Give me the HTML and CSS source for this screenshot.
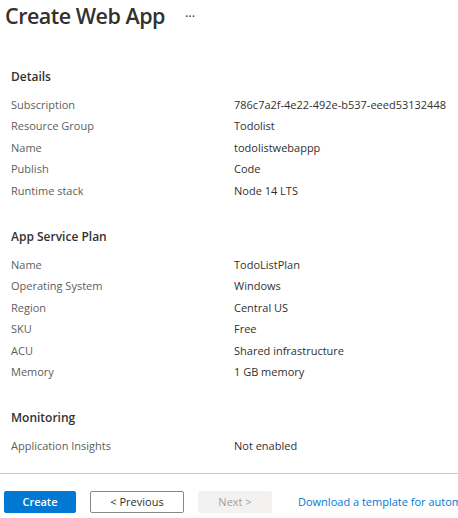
FILE: index.html
```html
<!DOCTYPE html>
<html lang="en">
<head>
<meta charset="utf-8">
<title>Create Web App</title>
<link rel="stylesheet" href="styles.css">
</head>
<body>
<div class="page">
  <header class="header">
    <h1 class="title">Create Web App</h1>
    <span class="more">···</span>
  </header>
  <main class="content">
    <section class="section">
      <h2 class="section-title">Details</h2>
      <div class="row"><span class="label">Subscription</span><span class="value">786c7a2f-4e22-492e-b537-eeed53132448</span></div>
      <div class="row"><span class="label">Resource Group</span><span class="value">Todolist</span></div>
      <div class="row"><span class="label">Name</span><span class="value">todolistwebappp</span></div>
      <div class="row"><span class="label">Publish</span><span class="value">Code</span></div>
      <div class="row"><span class="label">Runtime stack</span><span class="value">Node 14 LTS</span></div>
    </section>
    <section class="section">
      <h2 class="section-title">App Service Plan</h2>
      <div class="row"><span class="label">Name</span><span class="value">TodoListPlan</span></div>
      <div class="row"><span class="label">Operating System</span><span class="value">Windows</span></div>
      <div class="row"><span class="label">Region</span><span class="value">Central US</span></div>
      <div class="row"><span class="label">SKU</span><span class="value">Free</span></div>
      <div class="row"><span class="label">ACU</span><span class="value">Shared infrastructure</span></div>
      <div class="row"><span class="label">Memory</span><span class="value">1 GB memory</span></div>
    </section>
    <section class="section">
      <h2 class="section-title">Monitoring</h2>
      <div class="row"><span class="label">Application Insights</span><span class="value">Not enabled</span></div>
    </section>
  </main>
  <footer class="footer">
    <button class="btn btn-primary">Create</button>
    <button class="btn btn-default">&lt; Previous</button>
    <button class="btn btn-disabled" disabled>Next &gt;</button>
    <a class="link" href="#">Download a template for automation</a>
  </footer>
</div>
</body>
</html>
```

FILE: styles.css
```css
* { box-sizing: border-box; }
html, body { margin: 0; padding: 0; background: #fff; }
body {
  font-family: "Segoe UI", "Open Sans", "Liberation Sans", sans-serif;
  font-size: 11px;
  color: #323130;
  overflow: hidden;
}
.page { width: 458px; height: 518px; display: flex; flex-direction: column; overflow: hidden; }
.header {
  display: flex;
  align-items: center;
  gap: 20px;
  padding: 0 0 0 5px;
  height: 32px;
  flex-shrink: 0;
}
.title {
  margin: 0;
  font-size: 21.5px;
  font-weight: 600;
  line-height: 32px;
  letter-spacing: -0.5px;
  color: #323130;
}
.more { font-size: 13px; color: #323130; line-height: 32px; }
.content { padding: 36px 0 0 11px; flex-shrink: 0; }
.section { margin-bottom: 27px; }
.section:last-child { margin-bottom: 0; }
.section-title {
  margin: 0 0 8px 0;
  font-size: 12px;
  font-weight: 600;
  line-height: 18px;
  color: #323130;
}
.row { display: grid; grid-template-columns: 223px 1fr; height: 21.4px; line-height: 21.4px; white-space: nowrap; }
.label { color: #605e5c; }
.value { color: #323130; }
.footer {
  margin-top: auto;
  border-top: 1px solid #c8c6c4;
  height: 45px;
  padding: 17px 0 0 4px;
  display: flex;
  align-items: flex-start;
  white-space: nowrap;
  overflow: hidden;
  flex-shrink: 0;
}
.btn {
  flex-shrink: 0;
  font-family: inherit;
  font-size: 11px;
  height: 22px;
  padding: 0;
  border-radius: 2px;
  line-height: 20px;
}
.btn-primary { width: 72px; background: #0078d4; border: 1px solid #0078d4; color: #fff; font-weight: 600; }
.btn-default { width: 94px; margin-left: 14px; background: #fff; border: 1px solid #8a8886; color: #323130; }
.btn-disabled { width: 74px; margin-left: 14px; background: #f3f2f1; border: 1px solid #f3f2f1; color: #a19f9d; }
.link { flex-shrink: 0; margin-left: 26px; color: #0078d4; text-decoration: none; line-height: 22px; font-size: 11px; }
```
